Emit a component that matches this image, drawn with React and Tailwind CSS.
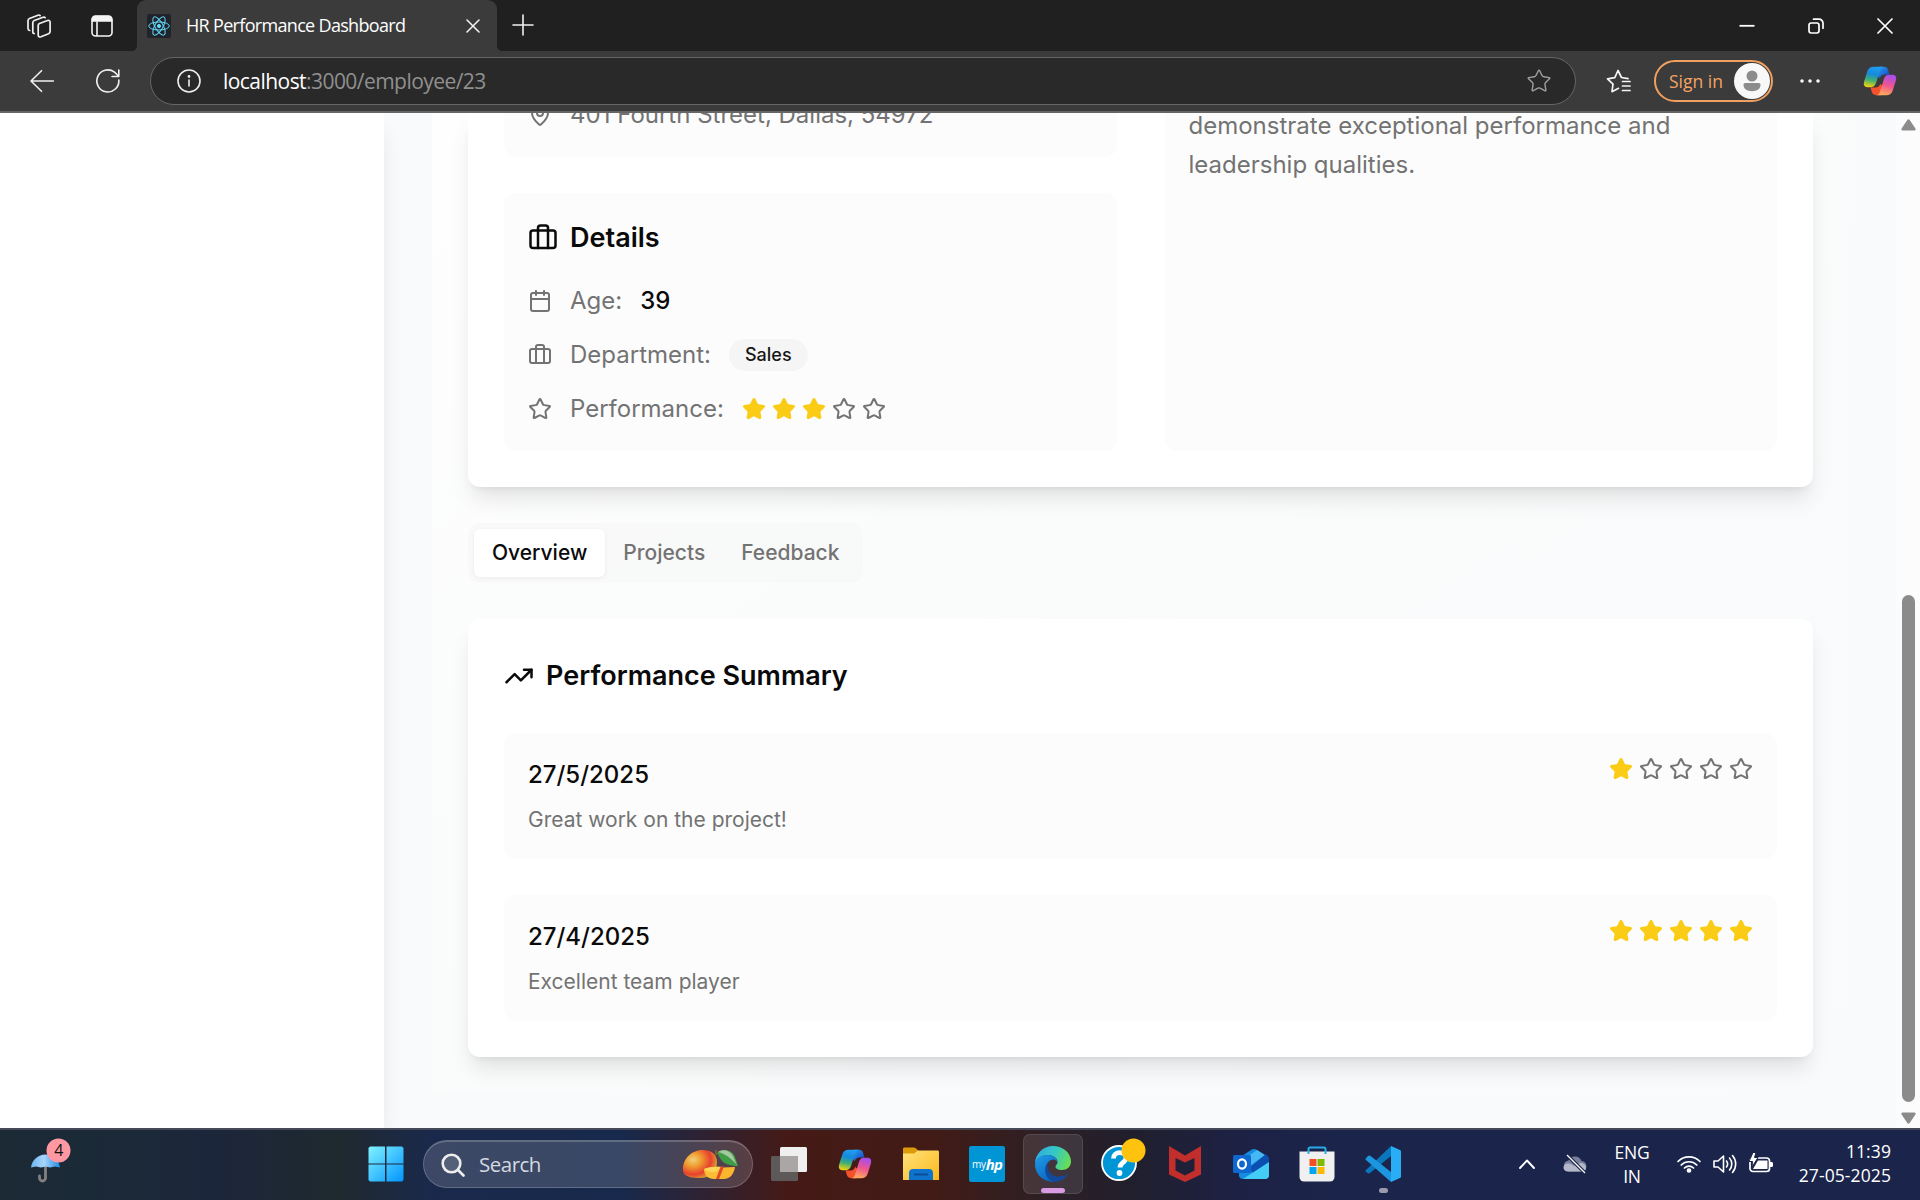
import React from "react";
import { MapPin, Star, TrendingUp } from "lucide-react";

const UI = "font-['Open_Sans',sans-serif]";

function Luggage({ className }) {
  return (
    <svg viewBox="0 0 24 24" fill="none" stroke="currentColor" strokeWidth="2" strokeLinecap="round" strokeLinejoin="round" className={className}>
      <rect x="2" y="6" width="20" height="14" rx="2" />
      <path d="M16 20V4a2 2 0 0 0-2-2h-4a2 2 0 0 0-2 2v16" />
    </svg>
  );
}

function CalendarIcon({ className }) {
  return (
    <svg viewBox="0 0 24 24" fill="none" stroke="currentColor" strokeWidth="2" strokeLinecap="round" strokeLinejoin="round" className={className}>
      <rect x="3" y="4" width="18" height="18" rx="2" />
      <path d="M8 2v4M16 2v4M3 10h18" />
    </svg>
  );
}

function Rating({ value }) {
  return (
    <div className="flex gap-[6px]">
      {[1, 2, 3, 4, 5].map((n) => (
        <Star key={n} className={n <= value ? "size-6 fill-[#facc15] text-[#facc15]" : "size-6 text-[#737373]"} />
      ))}
    </div>
  );
}

function Row({ icon, children }) {
  return (
    <div className="flex h-9 items-center gap-[18px] text-[24px] leading-9 text-[#737373]">
      {icon}
      {children}
    </div>
  );
}

function Copilot({ id, className }) {
  return (
    <svg viewBox="0 0 36 32" className={className}>
      <defs>
        <linearGradient id={id + "a"} x1="0.5" y1="0" x2="0.3" y2="1">
          <stop offset="0" stopColor="#1f9df0" />
          <stop offset="0.35" stopColor="#1689dc" />
          <stop offset="0.65" stopColor="#3fae74" />
          <stop offset="1" stopColor="#f3d40c" />
        </linearGradient>
        <linearGradient id={id + "b"} x1="0.7" y1="0" x2="0.4" y2="1">
          <stop offset="0" stopColor="#a44df0" />
          <stop offset="0.5" stopColor="#ee5590" />
          <stop offset="1" stopColor="#ffa95c" />
        </linearGradient>
        <linearGradient id={id + "c"} x1="0" y1="0" x2="1" y2="1">
          <stop offset="0" stopColor="#2aa9ef" />
          <stop offset="1" stopColor="#1539c0" />
        </linearGradient>
      </defs>
      <path d="M17 1h5c2.500 0 4 1 4.700 3.500L28 9h-5c-3 0-4.500 1.500-5.300 4L15 10z" fill={`url(#${id}c)`} />
      <path d="M19 31h-5c-2.500 0-4-1-4.700-3.500L8 23h5c3 0 4.500-1.500 5.300-4L21 22z" fill="#f4512c" />
      <path d="M11.500 1H22c-2 0-3.200 1.400-4 4l-4 12.500c-.8 2.800-2.600 5-5.200 5H5c-3.700 0-4.800-2.500-3.800-6L4.500 6C5.500 2.800 7.700 1 11.500 1z" fill={`url(#${id}a)`} />
      <path d="M24.500 31H14c2 0 3.200-1.400 4-4l4-12.500c.8-2.800 2.600-5 5.200-5H31c3.700 0 4.800 2.500 3.800 6L31.500 26c-1 3.200-3.200 5-7 5z" fill={`url(#${id}b)`} />
    </svg>
  );
}

function TabStrip() {
  return (
    <div className="flex h-[51px] items-center bg-[#202020] text-white">
      <svg viewBox="0 0 24 24" className="ml-[27px] size-6 shrink-0" fill="none" stroke="#f0f0f0" strokeWidth="1.700" strokeLinejoin="round" strokeLinecap="round">
        <path d="M12.500 9.500 20.500 6.500c1.600-.5 2.600.2 2.600 1.700v9.300c0 1-.5 1.700-1.500 2.200l-7.600 3.100c-1.600.6-2.800-.2-2.800-1.800v-9.400c0-1 .3-1.700 1.300-2.100z" />
        <path d="M7.300 19.500c-1 0-1.500-.8-1.500-1.800V8.700c0-1 .5-1.800 1.500-2.200l8.800-3.200c1-.3 1.700-.1 2.100.4" />
        <path d="M2.700 16.500C1.500 16.300 1 15.500 1 14.500V6.700c0-1 .5-1.800 1.500-2.200L11 1.200c1-.3 1.700-.1 2.100.4" />
      </svg>
      <svg viewBox="0 0 22 22" className="ml-10 size-[22px] shrink-0" fill="none" stroke="#f5f5f5" strokeWidth="1.600">
        <rect x="1" y="1" width="20" height="20" rx="3.500" />
        <path d="M1.500 6V4.500a3 3 0 0 1 3-3h13a3 3 0 0 1 3 3V6z" fill="#f5f5f5" />
        <path d="M6 6.500V21" />
      </svg>
      <div className="relative ml-6 flex h-[51px] w-[360px] items-center rounded-t-[9px] bg-[#3b3b3b] pl-[10px]">
        <svg viewBox="0 0 6 6" className="absolute bottom-0 -left-[6px] size-[6px]"><path d="M6 0v6H0c4 0 6-2 6-6z" fill="#3b3b3b" /></svg>
        <svg viewBox="0 0 6 6" className="absolute -right-[6px] bottom-0 size-[6px]"><path d="M0 0v6h6C2 6 0 4 0 0z" fill="#3b3b3b" /></svg>
        <svg viewBox="0 0 24 24" className="size-6 shrink-0">
          <rect width="24" height="24" rx="2" fill="#20232a" />
          <g fill="none" stroke="#61dafb" strokeWidth="1" transform="translate(12 12)">
            <ellipse rx="10.300" ry="4" />
            <ellipse rx="10.300" ry="4" transform="rotate(60)" />
            <ellipse rx="10.300" ry="4" transform="rotate(120)" />
            <circle r="1.600" fill="#61dafb" />
          </g>
        </svg>
        <span className={`${UI} ml-[15px] w-[222px] text-[18px] tracking-[-0.68px] whitespace-nowrap`}>HR Performance Dashboard</span>
        <svg viewBox="0 0 14 14" className="ml-[58px] size-[14px]" stroke="#f5f5f5" strokeWidth="1.500" strokeLinecap="round"><path d="M1 1l12 12M13 1 1 13" /></svg>
      </div>
      <svg viewBox="0 0 22 22" className="-mt-[1px] ml-[15px] size-[22px]" stroke="#f0f0f0" strokeWidth="1.600" strokeLinecap="round"><path d="M11 1v20M1 11h20" /></svg>
      <svg viewBox="0 0 16 16" className="ml-auto size-4" stroke="#fff" strokeWidth="1.800"><path d="M0.500 7.800h15" /></svg>
      <svg viewBox="0 0 16 16" className="ml-[53px] size-4" fill="none" stroke="#fff" strokeWidth="1.700" strokeLinecap="round">
        <rect x="1" y="5" width="10" height="10" rx="2.200" />
        <path d="M5.500 1.200H11a4 4 0 0 1 4 4v5" />
      </svg>
      <svg viewBox="0 0 16 16" className="mr-[27px] ml-[53px] size-4" stroke="#fff" strokeWidth="1.700" strokeLinecap="round"><path d="M1 1l14 14M15 1 1 15" /></svg>
    </div>
  );
}

function AddressBar() {
  return (
    <div className="flex h-[62px] items-center border-b-2 border-[#666] bg-[#3b3b3b]">
      <svg viewBox="0 0 24 24" className="ml-[30px] size-6 shrink-0" fill="none" stroke="#f0f0f0" strokeWidth="1.600" strokeLinecap="round" strokeLinejoin="round"><path d="M23.300 12H1M11.500 1.700 1 12l10.500 10.300" /></svg>
      <svg viewBox="0 0 24 24" className="ml-[42px] size-6 shrink-0" fill="none" stroke="#f0f0f0" strokeWidth="1.600" strokeLinecap="round" strokeLinejoin="round"><path d="M22.800 11A11 11 0 1 1 18.500 3.200L22.500 7M22.800 1v6.500H16" /></svg>
      <div className="ml-[30px] flex h-12 w-[1426px] items-center rounded-full border border-[#666] bg-[#292929]">
        <svg viewBox="0 0 24 24" className="ml-[26px] size-6" fill="none" stroke="#eee" strokeWidth="1.600" strokeLinecap="round"><circle cx="12" cy="12" r="11" /><path d="M12 11v6" /><circle cx="12" cy="7.500" r="0.600" fill="#eee" /></svg>
        <span className={`${UI} ml-[22px] pt-[2px] text-[21px] tracking-[-0.55px] text-[#909090]`}><span className="text-white">localhost</span>:3000/employee/23</span>
        <Star className="mr-[23px] ml-auto size-[26px] text-[#a0a0a0]" strokeWidth={1.3} />
      </div>
      <svg viewBox="0 0 25 24" className="ml-[30px] h-6 w-[25px] shrink-0" fill="none" stroke="#f5f5f5" strokeWidth="1.700" strokeLinecap="round" strokeLinejoin="round"><path d="M12.500 19.300 6 22.700l1-7.500-5.500-5.400 7.300-1.200L12 1.500l3.500 7 6.500 1.200M16.500 12.500H24M16.500 17H24M16.500 21.500H24" /></svg>
      <div className={`${UI} ml-[23px] flex h-[42px] w-[119px] items-center justify-between rounded-full border-2 border-[#f0a060] pr-[1px] pl-[13px] text-[17.500px] text-[#f5a362]`}>
        <span className="whitespace-nowrap">Sign in</span>
        <svg viewBox="0 0 36 36" className="size-9"><circle cx="18" cy="18" r="18" fill="#f8f8f8" /><circle cx="18" cy="13" r="5.500" fill="#8c8c8c" /><path d="M11.500 20h13c1.300 0 2 .8 2 2 0 3.800-3.500 6.200-8.500 6.200S9.500 25.800 9.500 22c0-1.200.7-2 2-2z" fill="#8c8c8c" /></svg>
      </div>
      <svg viewBox="0 0 20 4" className="ml-[27px] h-1 w-5" fill="#f5f5f5"><circle cx="2" cy="2" r="1.800" /><circle cx="10" cy="2" r="1.800" /><circle cx="18" cy="2" r="1.800" /></svg>
      <Copilot id="cpA" className="ml-[43px] h-8 w-[34px]" />
    </div>
  );
}

function Review({ date, note, stars }) {
  return (
    <div className="flex h-[126px] items-start justify-between rounded-[12px] bg-[#fcfcfc] p-6">
      <div>
        <p className="text-[24px] leading-9 font-medium text-[#0a0a0a]">{date}</p>
        <p className="mt-3 text-[21px] leading-[30px] text-[#737373]">{note}</p>
      </div>
      <Rating value={stars} />
    </div>
  );
}

const CARD = "rounded-[12px] bg-white px-9 pb-9 shadow-[0_15px_22.500px_-4.500px_rgba(0,0,0,0.1),0_6px_9px_-6px_rgba(0,0,0,0.1)]";

function Page() {
  return (
    <div className="flex h-[1015px] overflow-hidden bg-[#f8fafc] font-['Inter',sans-serif] text-[#0a0a0a]">
      <aside className="z-10 w-96 shrink-0 bg-white shadow-[0_15px_22px_-4px_rgba(0,0,0,0.1)]" />
      <main className="ml-12 h-[980px] w-[1417px] shrink-0 bg-linear-to-br from-[#fefefe] via-[#fafbfb] to-[#f8fafc] px-9">
        <section className={`${CARD} grid h-[374px] grid-cols-2 gap-12 rounded-t-none`}>
          <div className="flex flex-col gap-9">
            <div className="h-11 overflow-hidden rounded-b-[12px] bg-[#fcfcfc] px-6">
              <div className="-mt-4">
                <Row icon={<MapPin className="size-6" />}>401 Fourth Street, Dallas, 54972</Row>
              </div>
            </div>
            <div className="flex h-[258px] flex-col gap-[18px] rounded-[12px] bg-[#fcfcfc] p-6">
              <h3 className="mb-[6px] flex items-center gap-3 text-[27px] leading-[42px] font-semibold"><Luggage className="size-[30px]" />Details</h3>
              <Row icon={<CalendarIcon className="size-6" />}>Age:<span className="font-medium text-[#0a0a0a]">39</span></Row>
              <Row icon={<Luggage className="size-6" />}>Department:<span className="flex h-8 items-center rounded-full bg-[#f5f5f5] px-4 text-[18px] font-medium text-[#171717]">Sales</span></Row>
              <Row icon={<Star className="size-6" />}>Performance:<Rating value={3} /></Row>
            </div>
          </div>
          <div className="rounded-b-[12px] bg-[#fcfcfc] px-6">
            <p className="-mt-[7px] text-[24px] leading-[39px] text-[#737373]">demonstrate exceptional performance and<br />leadership qualities.</p>
          </div>
        </section>
        <nav className="mt-9 flex h-[60px] w-fit items-center rounded-[12px] bg-[#f5f5f5]/50 p-[6px] text-[21px] leading-[30px] font-medium text-[#737373]">
          <span className="rounded-[6px] bg-white px-[18px] py-[9px] text-[#0a0a0a] shadow-[0_1px_4px_rgba(0,0,0,0.06)]">Overview</span>
          <span className="px-[18px]">Projects</span>
          <span className="px-[18px]">Feedback</span>
        </nav>
        <section className={`${CARD} mt-9 flex flex-col gap-9 pt-9`}>
          <h2 className="flex items-center gap-3 text-[27px] leading-[42px] font-semibold"><TrendingUp className="size-[30px]" />Performance Summary</h2>
          <Review date="27/5/2025" note="Great work on the project!" stars={1} />
          <Review date="27/4/2025" note="Excellent team player" stars={5} />
        </section>
      </main>
      <div className="ml-auto flex w-6 flex-col items-center bg-[#fcfcfc] pt-[6px] pl-[1px]">
        <svg viewBox="0 0 15 12" className="h-3 w-[15px]"><path d="M6.300 1 .6 9.500C0 10.500.5 11.500 1.500 11.500h12c1 0 1.500-1 .9-2L8.700 1c-.6-.9-1.800-.9-2.400 0z" fill="#8b8b8b" /></svg>
        <div className="mt-[464px] h-[507px] w-[13px] rounded-full bg-[#8b8b8b]" />
        <svg viewBox="0 0 15 12" className="mt-[10px] h-3 w-[15px]"><path d="M6.300 11 .6 2.500C0 1.500.5.500 1.500.500h12c1 0 1.500 1 .9 2L8.700 11c-.6.9-1.800.9-2.400 0z" fill="#8b8b8b" /></svg>
      </div>
    </div>
  );
}

function Weather() {
  return (
    <svg viewBox="0 0 42 46" className={`${UI} -mt-[6px] ml-[30px] h-[46px] w-[42px] shrink-0`}>
      <defs><linearGradient id="umb" x1="0" x2="1"><stop offset="0" stopColor="#6db5f2" /><stop offset="0.45" stopColor="#a8d5fb" /><stop offset="1" stopColor="#1e8be8" /></linearGradient></defs>
      <path d="M15.500 28v12a3 3 0 0 1-6 0v-2" fill="none" stroke="#857f7f" strokeWidth="2.800" strokeLinecap="round" />
      <path d="M1 29.500C2 22 8 16.500 15.500 16.500S29 22 30 29.500l-5-1-5 1-4.500-1-4.500 1-5-1z" fill="url(#umb)" />
      <circle cx="28.500" cy="12.500" r="12" fill="#fe99a4" />
      <text x="28.800" y="18" textAnchor="middle" fontSize="16" fill="#111">4</text>
    </svg>
  );
}

function Mango() {
  return (
    <svg viewBox="0 0 56 32" className="mr-[14px] ml-auto h-8 w-14">
      <defs><radialGradient id="mango" cx="0.3" cy="0.35" r="0.75"><stop offset="0" stopColor="#f0d080" /><stop offset="0.3" stopColor="#f0a030" /><stop offset="0.7" stopColor="#e8402e" /><stop offset="1" stopColor="#d9b332" /></radialGradient></defs>
      <path d="M1 20C1 9 10 1 21 1c8 0 14 4 14 12 0 10-8 17-19 16C7 29 0 26 1 20z" fill="url(#mango)" />
      <path d="M34 6V1" stroke="#9a5b20" strokeWidth="1.600" />
      <path d="M35 4c4-5 16-4 18 4l3 9c-8 0-15-2-18-8z" fill="#3e9d45" />
      <path d="M36 3c5-3 12-2 15 4l4 9C48 8 43 5 36 3z" fill="#a6c8a0" />
      <path d="M22 20c5-2 12-2.500 19-2l-4 12h-5c-6 0-10-4-10-10z" fill="#fdbd35" />
      <path d="M41 18.500 53 18c-1 7-5 12-11 12h-7z" fill="#fcb52f" />
      <path d="M42 17.500l-5 12.500h-3l4.500-12z" fill="#e74928" />
      <path d="M22 20c5-2 11-2.500 16-2-1 4-4 5-8 5-3 0-6-1-8-3z" fill="#ffd65a" />
    </svg>
  );
}

function Taskbar() {
  return (
    <div className={`${UI} flex h-[72px] items-center border-t-2 border-[#464958] bg-[linear-gradient(90deg,#1b2a35_0,#1b2938_140px,#1c263b_210px,#1f292f_340px,#1a294b_430px,#17294c_620px,#33202d_720px,#451a16_790px,#421b16_930px,#2b2027_1060px,#211f2c_1130px,#1d2245_1240px,#1b244b_1340px)] pb-[2px] text-white`}>
      <Weather />
      <svg viewBox="0 0 36 36" className="ml-[296px] size-9 shrink-0">
        <defs><linearGradient id="win" x1="0" y1="0" x2="1" y2="1"><stop offset="0" stopColor="#80f3ff" /><stop offset="1" stopColor="#0294ff" /></linearGradient></defs>
        <path d="M2 .500h15v17H.500V2zM18.500.500H34L35.500 2v15.500h-17zM.500 18.500H17v17H2L.500 34zM18.500 18.500h17V34L34 35.500H18.500z" fill="url(#win)" />
      </svg>
      <div className="ml-[19px] flex h-12 w-[330px] shrink-0 items-center rounded-full border border-t-2 border-white/20 bg-white/15">
        <svg viewBox="0 0 24 24" className="ml-[17px] size-6" fill="none" stroke="#eee" strokeWidth="2.600" strokeLinecap="round"><circle cx="10.500" cy="10.500" r="8.800" fill="#ffffff20" /><path d="m17 17 5.500 5.500" /></svg>
        <span className="ml-[14px] text-[20.500px] tracking-[-0.5px] text-[#d5d9e0]">Search</span>
        <Mango />
      </div>
      <svg viewBox="0 0 36 36" className="ml-[18px] size-9 shrink-0"><rect x="9" y="1" width="27" height="25" rx="1.500" fill="#efefef" /><rect y="10" width="27" height="25" rx="1.500" fill="#5c5958" /><path d="M9 10h18v16H9z" fill="#aaa6a6" /></svg>
      <Copilot id="cpB" className="ml-[31px] h-8 w-[34px] shrink-0" />
      <svg viewBox="0 0 36 34" className="ml-[31px] h-[34px] w-9 shrink-0">
        <defs><linearGradient id="fld" x1="0" y1="0" x2="1" y2="1"><stop offset="0" stopColor="#ffe27c" /><stop offset="1" stopColor="#fbb91b" /></linearGradient></defs>
        <path d="M0 2C0 1 .5.500 1.500.500H11c2 0 3 2.500 4.500 3V9H0z" fill="#dd9a08" />
        <path d="M0 6.500h11l4-3h19.500c1 0 1.500.6 1.500 1.500v28H0z" fill="url(#fld)" />
        <path d="M6 33V26c0-2.500 1.500-4 4-4h16c2.500 0 4 1.500 4 4v7z" fill="#0d73cc" /><path d="M11 27.500h14" stroke="#0b4b94" strokeWidth="1.800" />
      </svg>
      <div className="ml-[30px] flex size-9 shrink-0 items-center justify-center rounded-[2px] bg-[#0096d6] leading-none">
        <span className="text-[10px] tracking-[-0.3px]">my</span><span className="text-[15px] font-bold tracking-[-0.800px] italic">hp</span>
      </div>
      <div className="ml-[18px] flex h-[60px] w-[60px] shrink-0 flex-col items-center rounded-[7px] border border-white/10 bg-white/10 pt-[11px]">
        <svg viewBox="0 0 36 36" className="size-9 shrink-0">
          <defs>
            <linearGradient id="eg1" x1="0" y1="0.3" x2="1" y2="0.6"><stop offset="0" stopColor="#32a9e3" /><stop offset="0.5" stopColor="#35c9c5" /><stop offset="1" stopColor="#6ade50" /></linearGradient>
            <linearGradient id="eg2" x1="0" y1="0" x2="0.6" y2="1"><stop offset="0" stopColor="#1e9eea" /><stop offset="1" stopColor="#0c65be" /></linearGradient>
          </defs>
          <path d="M0 18C0 8 8 0 18 0s18 7 18 15.500c0 5-4 8.500-9 8.500-4 0-6.500-1.600-6.500-3.300 0-1.500 2-2 2-5C22.500 12 18 9 12.500 9 6 9 1.500 12.500 0 18z" fill="url(#eg1)" />
          <path d="M0 18c1-6 6-9 12.500-9 6 0 10 3.500 9.800 7-.3-1-2-2.500-4-2.500-4 0-7 3.800-7 8.500 0 7 4 12.500 11.500 13.500C12 37.500 0 31 0 18z" fill="url(#eg2)" />
          <path d="M14 15.500c-4 6.500 1 15 9.500 15 4.500 0 7-1 10-3.200C31 32.500 25 36 19.500 36 12 34 9 27 10.500 21c.6-2.500 2-4.500 3.500-5.500z" fill="#12499a" />
        </svg>
        <div className="mt-[6px] h-[5px] w-6 shrink-0 rounded-full bg-[#d99be4]" />
      </div>
      <svg viewBox="0 0 46 44" className="-mt-2 ml-[18px] h-11 w-[46px] shrink-0">
        <circle cx="18" cy="25" r="17" fill="#0096d6" stroke="#fff" strokeWidth="1.800" />
        <path d="M12.500 20.500c0-8 12.500-7.500 12.500-.5 0 4.500-6 4.500-6 9.500" fill="none" stroke="#fff" strokeWidth="4.800" /><circle cx="18.500" cy="35" r="2.900" fill="#fff" />
        <circle cx="32.500" cy="12.500" r="12" fill="#ffc20e" />
      </svg>
      <svg viewBox="0 0 32 36" className="ml-[22px] h-9 w-8 shrink-0"><path d="M0 0l16 9.500L32 0v28.500L16 36 0 28.500zM6.500 12v12.500l9.500 5 9.500-5V12L16 16.500z" fill="#c22e2b" fillRule="evenodd" /></svg>
      <svg viewBox="0 0 36 32" className="ml-8 h-8 w-9 shrink-0">
        <path d="M6 10 18 2c2-1.200 4-1.200 6 0l12 8v17c0 2.500-1.500 4-4 4H10c-2.500 0-4-1.500-4-4z" fill="#168ce1" />
        <path d="M10 12 24 2l8 5-14 10z" fill="#45b7f3" /><path d="M16 20 33 6l3 4v5L20 25z" fill="#0b4fb0" /><path d="M36 14v13c0 2.500-1.500 4-4 4H10z" fill="#43ccf5" />
        <rect y="7" width="18" height="18" rx="1.500" fill="#0f68cf" /><ellipse cx="9" cy="16" rx="4" ry="4.600" fill="none" stroke="#fff" strokeWidth="2.200" />
      </svg>
      <svg viewBox="0 0 36 36" className="ml-[30px] size-9 shrink-0"><path d="M9.500 8V3c0-.8.600-1.500 1.500-1.500h14c.9 0 1.500.700 1.500 1.500v5" fill="none" stroke="#27abe9" strokeWidth="2" /><path d="M.500 5.500h35V31a4.500 4.500 0 0 1-4.500 4.500H5A4.500 4.500 0 0 1 .500 31z" fill="#f0f0f0" /><path d="M9.500 5v3M26.500 5v3" stroke="#27abe9" strokeWidth="2" /><path d="M10.500 13h7v7h-7z" fill="#f25022" /><path d="M18.500 13h7v7h-7z" fill="#7fba00" /><path d="M10.500 21h7v7h-7z" fill="#00a4ef" /><path d="M18.500 21h7v7h-7z" fill="#ffb900" /></svg>
      <div className="ml-[30px] flex shrink-0 flex-col items-center pt-[11px]">
        <svg viewBox="0 0 36 36" className="size-9"><path d="M1 24 26 0v10L5 27c-1 .8-2 .6-2.800-.2L.600 25.500c-.6-.5-.2-1 .4-1.500z" fill="#0a77bd" /><path d="M.700 12.500 3 10c.8-.8 1.800-.7 2.600 0L26 26v10L1 14c-.6-.5-.8-1-.3-1.500z" fill="#1d96e0" /><path d="M26 0l9 4c.6.3 1 .8 1 1.500v25c0 .7-.4 1.200-1 1.500l-9 4z" fill="#29adf4" /></svg>
        <div className="mt-[6px] h-[5px] w-[9px] rounded-full bg-[#9a9bae]" />
      </div>
      <svg viewBox="0 0 16 10" className="ml-auto h-[10px] w-4" fill="none" stroke="#fff" strokeWidth="1.900" strokeLinecap="round" strokeLinejoin="round"><path d="m1 9 7-7.500L15 9" /></svg>
      <svg viewBox="0 0 24 20" className="ml-[28px] h-5 w-6"><path d="M6 17.500a5.500 5.500 0 0 1-.5-10.900A7 7 0 0 1 18.500 7 5.300 5.300 0 0 1 19 17.500z" fill="#7c819b" /><path d="M5 17.500c-6 0-6-8 0-8 3 0 4 1 6 2.500l6-3c6-1 9 8 2 8.500z" fill="#b6b9c9" /><path d="m4 1 18 18" stroke="#1b244b" strokeWidth="3.500" /><path d="m4 1 18 18" stroke="#fff" strokeWidth="1.300" /></svg>
      <div className="ml-[27px] w-9 text-center text-[17.500px] leading-6 tracking-[-0.2px]">ENG<br />IN</div>
      <svg viewBox="0 0 24 18" className="ml-[27px] h-[18px] w-6" fill="none" stroke="#fff" strokeWidth="1.700" strokeLinecap="round"><path d="M1 6.500a15.500 15.500 0 0 1 22 0M4.200 10a11 11 0 0 1 15.600 0M7.500 13a6.500 6.500 0 0 1 9 0" /><circle cx="12" cy="15.500" r="1.500" fill="#fff" stroke="#fff" /></svg>
      <svg viewBox="0 0 24 20" className="ml-3 h-5 w-6" fill="none" stroke="#fff" strokeWidth="1.600" strokeLinecap="round" strokeLinejoin="round"><path d="M1 7v6h4l5.500 5V2L5 7zM13.500 7a5 5 0 0 1 0 6M16.500 4a9 9 0 0 1 0 12M19.500 1.500a13 13 0 0 1 0 17" /></svg>
      <svg viewBox="0 0 24 20" className="-mt-[3px] ml-3 h-5 w-6"><rect x="1" y="5" width="19.500" height="13.500" rx="3" fill="none" stroke="#fff" strokeWidth="1.700" /><path d="M21 9h1.500c.8 0 1.500.5 1.500 1.500v2c0 1-.7 1.500-1.500 1.500H21z" fill="#fff" /><path d="M9 7.500h9.500v8.500H4z" fill="#fff" /><path d="M4-.500h3L5.500 4.500H9L3 14l.5-5.500H0z" fill="#fff" stroke="#1b244b" strokeWidth="1" /></svg>
      <div className="-mt-[2px] mr-[29px] ml-[25px] w-[93px] text-right text-[17.500px] leading-6 tracking-[0.1px] whitespace-nowrap">11:39<br />27-05-2025</div>
    </div>
  );
}

export default function App() {
  return (
    <div className="h-[1200px] w-[1920px] overflow-hidden bg-[#1b244b]">
      <TabStrip />
      <AddressBar />
      <Page />
      <Taskbar />
    </div>
  );
}
